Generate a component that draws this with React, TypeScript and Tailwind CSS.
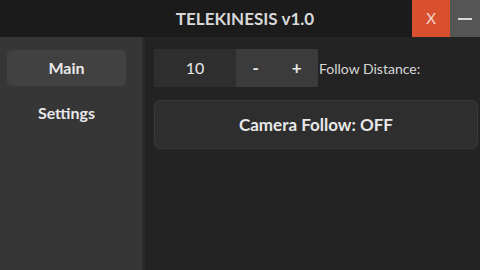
const App = () => {
  return (
    <div
      className="w-[480px] h-[270px] flex flex-col bg-[#232323] text-[#e8e8e8] overflow-hidden"
      style={{ fontFamily: "Lato, 'Noto Sans', sans-serif" }}
    >
      <div className="h-[37px] flex bg-[#1b1b1b] shrink-0">
        <div className="flex-1 flex items-center justify-center pl-[78px] text-[17px] font-bold text-[#d8d8d8]">
          TELEKINESIS v1.0
        </div>
        <button className="w-[38px] bg-[#d9502f] text-[#f4d6cc] text-[15px] flex items-center justify-center">
          X
        </button>
        <button className="w-[30px] bg-[#555555] flex items-center justify-center">
          <span className="block w-[14px] h-[2px] bg-[#d8d8d8]" />
        </button>
      </div>
      <div className="flex flex-1">
        <div className="w-[142px] bg-[#363636] flex flex-col pl-[7px] pr-[16px] pt-[13px] gap-[9px]">
          <div className="h-[36px] rounded-[5px] bg-[#414141] flex items-center justify-center text-[16px] font-bold">
            Main
          </div>
          <div className="h-[36px] flex items-center justify-center text-[16px] font-bold">
            Settings
          </div>
        </div>
        <div className="w-[3px] bg-[#2a2a2a]" />
        <div className="flex-1 flex flex-col pl-[9px] pt-[12px] gap-[13px]">
          <div className="flex items-center h-[38px]">
            <div className="w-[82px] h-full bg-[#2e2e2e] flex items-center justify-center text-[16px]">
              10
            </div>
            <div className="w-[82px] h-full bg-[#3b3b3b] flex items-center justify-around text-[17px] font-bold">
              <span>-</span>
              <span>+</span>
            </div>
            <span className="pl-[1px] text-[14px] text-[#d6d6d6]">Follow Distance:</span>
          </div>
          <div className="h-[49px] mr-[2px] rounded-[6px] bg-[#2e2e2e] border border-[#383838] flex items-center justify-center text-[17px] font-bold">
            Camera Follow: OFF
          </div>
        </div>
      </div>
    </div>
  );
};

export default App;
